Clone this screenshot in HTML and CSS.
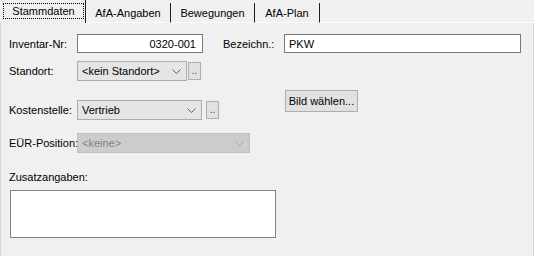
FILE: index.html
```html
<!DOCTYPE html>
<html lang="de">
  <head>
    <meta charset="UTF-8" />
    <meta name="viewport" content="width=device-width, initial-scale=1.0" />
    <title>Anlage – Stammdaten</title>
    <link rel="stylesheet" href="styles.css">
  </head>
  <body>
    <div class="window">
      <div class="tabs">
        <div class="tab active"><span class="focus">Stammdaten</span></div>
        <div class="tab t2">AfA-Angaben</div>
        <div class="tab t3">Bewegungen</div>
        <div class="tab t4">AfA-Plan</div>
        <div class="tab-fill"></div>
      </div>

      <div class="panel">
        <div class="row row-top">
          <span class="lbl">Inventar-Nr:</span>
          <div class="edit edit-nr">0320-001</div>
          <span class="lbl lbl-bez">Bezeichn.:</span>
          <div class="edit edit-bez">PKW</div>
        </div>

        <div class="row row-ort">
          <span class="lbl">Standort:</span>
          <div class="combo combo-ort">
            <span>&lt;kein Standort&gt;</span>
            <svg class="chev" width="9" height="5" viewBox="0 0 9 5"><polyline points="0.5,0.5 4.5,4.5 8.5,0.5" fill="none" stroke="#5f5f5f" stroke-width="1"/></svg>
          </div>
          <div class="dots">..</div>
        </div>

        <div class="row row-kst">
          <div class="row-inner">
            <span class="lbl">Kostenstelle:</span>
            <div class="combo combo-kst">
              <span>Vertrieb</span>
              <svg class="chev" width="9" height="5" viewBox="0 0 9 5"><polyline points="0.5,0.5 4.5,4.5 8.5,0.5" fill="none" stroke="#5f5f5f" stroke-width="1"/></svg>
            </div>
            <div class="dots dots-kst">..</div>
          </div>
          <div class="btn">Bild wählen...</div>
        </div>

        <div class="row row-eur">
          <span class="lbl">EÜR-Position:</span>
          <div class="combo combo-eur">
            <span>&lt;keine&gt;</span>
            <svg class="chev" width="9" height="5" viewBox="0 0 9 5"><polyline points="0.5,0.5 4.5,4.5 8.5,0.5" fill="none" stroke="#a8a8a8" stroke-width="1"/></svg>
          </div>
        </div>

        <div class="lbl lbl-zus">Zusatzangaben:</div>
        <div class="memo"></div>
      </div>
    </div>
  </body>
</html>
```

FILE: styles.css
```css
body {
  margin: 0;
  background-color: #f0f0f0;
  font-family: "Liberation Sans", Arial, sans-serif;
  font-size: 11px;
  color: #000;
}
.window {
  width: 534px;
  height: 256px;
  background-color: #f0f0f0;
  white-space: nowrap;
}
.tabs {
  display: flex;
  height: 23px;
  padding-left: 2px;
}
.tab {
  margin-top: 3px;
  border-right: 1px solid #1e1e1e;
  border-bottom: 1px solid #fcfcfc;
  display: flex;
  align-items: center;
  justify-content: center;
  height: 19px;
}
.tab.active {
  margin-top: 0;
  height: 23px;
  width: 83px;
  border-bottom: none;
  align-items: flex-start;
}
.focus {
  margin-top: 3px;
  width: 81px;
  height: 16px;
  border: 1px dotted #000;
  box-sizing: border-box;
  display: flex;
  align-items: center;
  justify-content: center;
}
.t2 { width: 84px; }
.t3 { width: 83px; }
.t4 { width: 64px; }
.tab-fill {
  flex: 1;
  border-bottom: 1px solid #fcfcfc;
}
.panel {
  height: 231px;
  border: 1px solid #d6d6d6;
  border-top: none;
  padding: 11px 8px 0;
}
.row {
  display: flex;
  align-items: center;
}
.lbl {
  width: 68px;
  flex-shrink: 0;
}
.lbl-bez {
  width: 61px;
  margin-left: 20px;
}
.edit {
  height: 19px;
  box-sizing: border-box;
  border: 1px solid #7a7a7a;
  background-color: #fff;
  display: flex;
  align-items: center;
}
.edit-nr {
  width: 126px;
  justify-content: flex-end;
  padding-right: 6px;
}
.edit-bez {
  width: 237px;
  padding-left: 4px;
}
.row-ort {
  margin-top: 8px;
}
.combo {
  height: 20px;
  box-sizing: border-box;
  border: 1px solid #acacac;
  background-color: #e5e5e5;
  display: flex;
  align-items: center;
  justify-content: space-between;
  padding: 0 5px 0 4px;
}
.combo-ort { width: 110px; }
.combo-kst { width: 125px; }
.combo-eur {
  width: 173px;
  background-color: #cccccc;
  border-color: #bfbfbf;
  color: #838383;
}
.dots {
  width: 13px;
  height: 18px;
  box-sizing: border-box;
  margin-left: 1px;
  border: 1px solid #adadad;
  background-color: #e1e1e1;
  display: flex;
  align-items: flex-end;
  justify-content: center;
  padding-bottom: 3px;
  font-size: 10px;
  line-height: 1;
  color: #2a3a7a;
}
.dots-kst {
  margin-left: 4px;
}
.row-kst {
  margin-top: 9px;
  align-items: flex-end;
}
.row-inner {
  display: flex;
  align-items: center;
}
.btn {
  margin-left: 66px;
  margin-bottom: 8px;
  width: 73px;
  height: 22px;
  box-sizing: border-box;
  border: 1px solid #adadad;
  background-color: #e1e1e1;
  display: flex;
  align-items: center;
  justify-content: center;
}
.row-eur {
  margin-top: 13px;
}
.lbl-zus {
  width: auto;
  margin-top: 17px;
  line-height: 14px;
}
.memo {
  margin-top: 6px;
  margin-left: 1px;
  width: 266px;
  height: 48px;
  box-sizing: border-box;
  border: 1px solid #828282;
  background-color: #fff;
}
```
